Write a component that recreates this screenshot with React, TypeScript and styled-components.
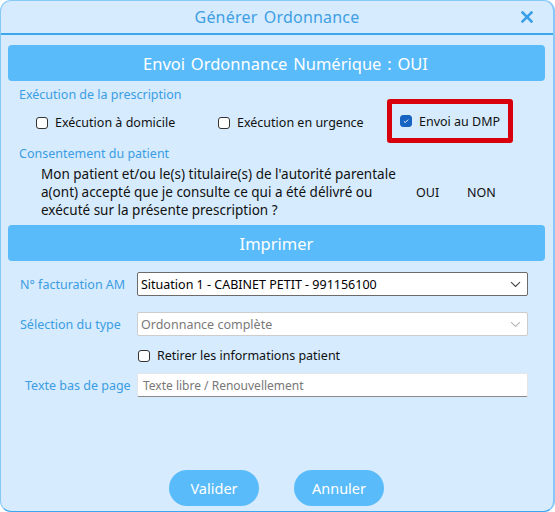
import React from "react";
import styled, { createGlobalStyle } from "styled-components";

const BLUE = "#59bbf9";
const LABEL = "#3b9de2";

const Global = createGlobalStyle`
  html, body {
    margin: 0;
    padding: 0;
    background: #ffffff;
  }
  body {
    font-family: "Noto Sans", "Open Sans", sans-serif;
  }
`;

const Window = styled.div`
  position: relative;
  width: 555px;
  height: 512px;
  box-sizing: border-box;
  background: #d6ebfe;
  border: 1px solid #86c8f7;
  border-right-width: 2px;
  border-bottom-color: #3ca6ef;
  border-radius: 11px;
  display: flex;
  flex-direction: column;
  overflow: hidden;
`;

const Header = styled.div`
  height: 32px;
  flex: none;
  border-bottom: 2px solid #3ca6ef;
  display: flex;
  align-items: center;
  justify-content: center;
`;

const Title = styled.span`
  color: #3e9fe3;
  font-size: 16px;
  letter-spacing: 0.2px;
  word-spacing: 2px;
`;

const Close = styled.button`
  position: absolute;
  top: 10px;
  right: 20px;
  width: 12px;
  height: 12px;
  padding: 0;
  border: none;
  background: none;
  display: flex;
  cursor: pointer;
`;

const Body = styled.div`
  flex: 1;
  display: flex;
  flex-direction: column;
  padding: 10px 8px 5px 7px;
`;

const Banner = styled.div<{ $offset?: number }>`
  height: 36px;
  flex: none;
  border-radius: 4px;
  background: ${BLUE};
  color: #ffffff;
  font-size: 16.5px;
  word-spacing: 1.5px;
  display: flex;
  align-items: center;
  justify-content: center;
  padding-left: ${({ $offset }) => $offset ?? 0}px;
`;

const SectionLabel = styled.div<{ $top: number }>`
  color: ${LABEL};
  font-size: 12.5px;
  margin: ${({ $top }) => $top}px 0 0 11px;
  line-height: 17px;
`;

const CheckRow = styled.div`
  display: flex;
  align-items: center;
  margin-top: -4px;
  padding-left: 28px;
  height: 44px;
`;

const Option = styled.label<{ $width?: number; $shift?: number }>`
  display: flex;
  align-items: center;
  gap: 7px;
  width: ${({ $width }) => ($width ? `${$width}px` : "auto")};
  margin-top: ${({ $shift }) => $shift ?? 0}px;
  font-size: 12.5px;
  color: #111111;
`;

const Highlight = styled.div`
  box-sizing: border-box;
  height: 44px;
  width: 126px;
  border: 5px solid #d9000d;
  border-radius: 3px;
  padding-left: 8px;
  display: flex;
  align-items: center;
`;

const Box = styled.span<{ $checked?: boolean }>`
  box-sizing: border-box;
  width: 12px;
  height: 12px;
  flex: none;
  border-radius: 3px;
  border: 1px solid ${({ $checked }) => ($checked ? "#1763c2" : "#333333")};
  background: ${({ $checked }) => ($checked ? "#1763c2" : "#ffffff")};
  display: flex;
  align-items: center;
  justify-content: center;
`;

const Consent = styled.div`
  display: grid;
  grid-template-columns: 375px 51px auto;
  align-items: center;
  padding-left: 33px;
  margin-top: 3px;
  color: #111111;
`;

const ConsentText = styled.p`
  margin: 0;
  font-size: 13.5px;
  line-height: 18px;
`;

const Answer = styled.span`
  font-size: 12.5px;
`;

const PrintBanner = styled(Banner)`
  margin-top: 6px;
`;

const FormRow = styled.div<{ $top: number }>`
  display: grid;
  grid-template-columns: 129px 391px;
  align-items: center;
  margin-top: ${({ $top }) => $top}px;
`;

const FieldLabel = styled.span<{ $indent?: number }>`
  color: ${LABEL};
  font-size: 12.5px;
  white-space: nowrap;
  padding-left: ${({ $indent }) => $indent ?? 12}px;
`;

const Select = styled.div<{ $disabled?: boolean }>`
  box-sizing: border-box;
  height: 24px;
  background: #ffffff;
  border: 1px solid ${({ $disabled }) => ($disabled ? "#cccccc" : "#6b6b6b")};
  border-radius: 2px;
  display: flex;
  align-items: center;
  justify-content: space-between;
  padding: 0 6px 0 3px;
  font-size: 12.5px;
  color: ${({ $disabled }) => ($disabled ? "#7a7a7a" : "#000000")};
`;

const TextInput = styled.div`
  box-sizing: border-box;
  height: 24px;
  background: #ffffff;
  border: 1px solid #e4e4e4;
  border-bottom-color: #8a8a8a;
  border-radius: 2px;
  display: flex;
  align-items: center;
  padding-left: 5px;
  font-size: 12px;
  color: #777777;
`;

const Retirer = styled.div`
  margin-top: 11px;
  padding-left: 130px;
`;

const Actions = styled.div`
  margin-top: auto;
  display: flex;
  justify-content: center;
  gap: 35px;
`;

const Action = styled.button`
  width: 90px;
  height: 36px;
  border: none;
  border-radius: 18px;
  background: ${BLUE};
  color: #ffffff;
  font-family: inherit;
  font-size: 14.5px;
  cursor: pointer;
`;

const Check = () => (
  <svg width="8" height="8" viewBox="0 0 8 8">
    <path d="M1.8 4.2 L3.3 5.6 L6.2 2.6" stroke="#ffffff" strokeWidth="0.9" fill="none" />
  </svg>
);

const Chevron = ({ color }: { color: string }) => (
  <svg width="11" height="7" viewBox="0 0 11 7">
    <path d="M1 1.2 L5.5 5.5 L10 1.2" stroke={color} strokeWidth="1.1" fill="none" />
  </svg>
);

export default function App() {
  return (
    <>
      <Global />
      <Window>
        <Header>
          <Title>Générer Ordonnance</Title>
        </Header>
        <Close aria-label="Fermer">
          <svg width="12" height="12" viewBox="0 0 12 12">
            <path d="M1.5 1.5 L10.5 10.5 M10.5 1.5 L1.5 10.5" stroke="#3a9fe8" strokeWidth="2.5" strokeLinecap="square" />
          </svg>
        </Close>
        <Body>
          <Banner $offset={18}>Envoi Ordonnance Numérique : OUI</Banner>

          <SectionLabel $top={5}>Exécution de la prescription</SectionLabel>
          <CheckRow>
            <Option $width={182} $shift={3}>
              <Box />
              Exécution à domicile
            </Option>
            <Option $width={169} $shift={3}>
              <Box />
              Exécution en urgence
            </Option>
            <Highlight>
              <Option>
                <Box $checked>
                  <Check />
                </Box>
                Envoi au DMP
              </Option>
            </Highlight>
          </CheckRow>

          <SectionLabel $top={2}>Consentement du patient</SectionLabel>
          <Consent>
            <ConsentText>
              Mon patient et/ou le(s) titulaire(s) de l'autorité parentale
              <br />
              a(ont) accepté que je consulte ce qui a été délivré ou
              <br />
              exécuté sur la présente prescription ?
            </ConsentText>
            <Answer>OUI</Answer>
            <Answer>NON</Answer>
          </Consent>

          <PrintBanner>Imprimer</PrintBanner>

          <FormRow $top={11}>
            <FieldLabel>N° facturation AM</FieldLabel>
            <Select>
              Situation 1 - CABINET PETIT - 991156100
              <Chevron color="#444444" />
            </Select>
          </FormRow>
          <FormRow $top={16}>
            <FieldLabel>Sélection du type</FieldLabel>
            <Select $disabled>
              Ordonnance complète
              <Chevron color="#b8b8b8" />
            </Select>
          </FormRow>
          <Retirer>
            <Option>
              <Box />
              Retirer les informations patient
            </Option>
          </Retirer>
          <FormRow $top={9}>
            <FieldLabel $indent={17}>Texte bas de page</FieldLabel>
            <TextInput>Texte libre / Renouvellement</TextInput>
          </FormRow>

          <Actions>
            <Action>Valider</Action>
            <Action>Annuler</Action>
          </Actions>
        </Body>
      </Window>
    </>
  );
}
